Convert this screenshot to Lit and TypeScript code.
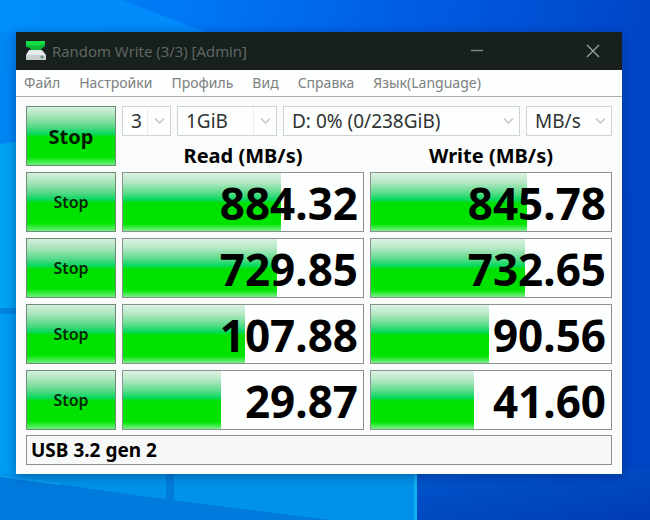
import { LitElement, html, css, svg } from "lit";
import { customElement, property } from "lit/decorators.js";

type Result = { value: string; fill: number };

const MENU = ["Файл", "Настройки", "Профиль", "Вид", "Справка", "Язык(Language)"];

const TESTS: { read: Result; write: Result }[] = [
  { read: { value: "884.32", fill: 66 }, write: { value: "845.78", fill: 65 } },
  { read: { value: "729.85", fill: 64 }, write: { value: "732.65", fill: 64 } },
  { read: { value: "107.88", fill: 51 }, write: { value: "90.56", fill: 49 } },
  { read: { value: "29.87", fill: 41 }, write: { value: "41.60", fill: 43 } },
];

@customElement("desktop-wallpaper")
class DesktopWallpaper extends LitElement {
  static styles = css`
    :host { display: block; }
    .art { display: block; width: 100%; height: 100%; }
  `;

  render() {
    return html`
      <svg class="art" viewBox="0 0 650 520" preserveAspectRatio="none" aria-hidden="true">
        ${svg`
          <defs>
            <linearGradient id="sky" x1="0" y1="0" x2="1" y2="0.12">
              <stop offset="0" stop-color="#0088f4" />
              <stop offset="0.3" stop-color="#0076f4" />
              <stop offset="0.6" stop-color="#005ee6" />
              <stop offset="0.95" stop-color="#0048ca" />
              <stop offset="1" stop-color="#0044c4" />
            </linearGradient>
            <linearGradient id="corner" x1="0" y1="0" x2="1" y2="1">
              <stop offset="0" stop-color="#0056cc" />
              <stop offset="1" stop-color="#003cb4" />
            </linearGradient>
          </defs>
          <rect width="650" height="520" fill="url(#sky)" />
          <path d="M0 0H122L205 32H0Z" fill="#0092fc" opacity="0.7" />
          <path d="M0 144L60 136V308H0Z" fill="#00a2f2" />
          <rect y="308" width="60" height="6" fill="#0084de" />
          <rect y="314" width="60" height="170" fill="#009cf2" />
          <rect y="474" width="418" height="46" fill="#0092e8" />
          <rect x="166" y="470" width="8" height="34" fill="#007cd8" />
          <path d="M0 476L170 500L330 520H0Z" fill="#007adc" />
          <path d="M0 476L60 484" stroke="#0a9cea" stroke-width="2" fill="none" />
          <rect x="417" y="470" width="233" height="50" fill="url(#corner)" />
          <rect x="414" y="470" width="3" height="50" fill="#10b0ee" />
        `}
      </svg>
    `;
  }
}

@customElement("drop-down")
class DropDown extends LitElement {
  @property() label = "";
  @property() value = "";
  @property({ type: Boolean, reflect: true }) split = false;

  static styles = css`
    :host { display: grid; height: 30px; box-sizing: border-box; border: 1px solid #cfd3d1; background: #fdfefe; }
    .box {
      grid-area: 1 / 1; width: 100%; min-width: 0; margin: 0; padding: 0 0 0 8px; border: 0; appearance: none;
      background: transparent; color: #2e3331; font: 19px "Noto Sans", sans-serif; line-height: 28px;
    }
    .arrow {
      grid-area: 1 / 1; justify-self: end; align-self: stretch; display: grid; place-items: center;
      width: 22px; pointer-events: none;
    }
    :host([split]) .arrow { border-left: 1px solid #eceeed; }
  `;

  render() {
    return html`
      <select class="box" aria-label=${this.label}><option>${this.value}</option></select>
      <span class="arrow">
        <svg width="11" height="8" viewBox="0 0 11 8" fill="none" stroke="#c0c4c2" stroke-width="1.5">
          <path d="M1 1.5L5.5 6L10 1.5" />
        </svg>
      </span>
    `;
  }
}

@customElement("speed-cell")
class SpeedCell extends LitElement {
  @property() value = "";
  @property({ type: Number }) fill = 0;

  static styles = css`
    :host {
      display: grid; height: 60px; box-sizing: border-box; border: 1px solid #8c908e; background: #fdfffe;
      font: bold 44px "Noto Sans", sans-serif; line-height: 60px; color: #000;
    }
    .bar {
      grid-area: 1 / 1;
      background: linear-gradient(#dcf2e2 0%, #b4e8c4 16%, #5cdc8c 34%, #08d860 46%, #00e000 52%, #00e400 88%, #7cf08c 100%);
    }
    .value { grid-area: 1 / 1; justify-self: end; padding-right: 5px; height: 58px; }
  `;

  render() {
    return html`
      <div class="bar" style="width:${this.fill}%"></div>
      <span class="value">${this.value}</span>
    `;
  }
}

@customElement("app-root")
class AppRoot extends LitElement {
  static styles = css`
    :host {
      display: grid; min-height: 100vh; overflow: hidden;
      font-family: "Noto Sans", "Open Sans", sans-serif; color: #000;
    }
    * { box-sizing: border-box; }
    button { font-family: inherit; margin: 0; padding: 0; border: 0; background: none; color: inherit; }
    .wallpaper { grid-area: 1 / 1; }
    .window {
      grid-area: 1 / 1; align-self: start; position: relative; margin: 32px 28px 0 16px;
      background: #fafcfb; box-shadow: 0 2px 10px rgba(0, 20, 80, 0.4);
    }
    .titlebar { display: flex; align-items: center; height: 38px; padding-left: 10px; background: #17201d; }
    .logo { display: block; }
    .title { margin: 0 auto 0 6px; font: 400 15px "Open Sans", sans-serif; line-height: 20px; color: #626a67; }
    .control { display: grid; place-items: center; width: 58px; height: 38px; }
    .menu { display: flex; gap: 19px; height: 27px; padding: 0 8px; background: #fdfefe; border-bottom: 1px solid #a9adab; }
    .item { font-size: 14px; line-height: 26px; color: #7c807e; }
    .content { display: flex; flex-direction: column; gap: 5px; padding: 9px 10px; }
    .grid { display: grid; grid-template-columns: 90px 1fr 1fr; gap: 6px; }
    .head { grid-column: 2 / 4; display: flex; flex-direction: column; height: 60px; }
    .options { display: flex; gap: 6px; }
    .runs { width: 49px; }
    .size { width: 100px; }
    .drive { flex: 1; }
    .unit { width: 86px; }
    .labels { display: grid; grid-template-columns: 1fr 1fr; gap: 6px; padding-top: 6px; }
    .label { margin: 0; font-size: 20px; line-height: 28px; font-weight: 700; text-align: center; }
    .grid .stop {
      height: 60px; border: 1px solid #6f8a76; font-size: 16px; font-weight: 600; color: #06280c;
      background: linear-gradient(#d4f0dc 0%, #a8e4ba 16%, #58d888 34%, #08d860 46%, #00e000 52%, #00e400 86%, #6cf07c 100%);
    }
    .grid .all { font-size: 20px; font-weight: 700; color: #001a04; }
    .comment {
      width: 100%; height: 30px; padding: 0 4px; border: 1px solid #8c908e; border-radius: 0; background: #f7f9f8;
      font: bold 19px "Noto Sans", sans-serif; color: #000;
    }
  `;

  render() {
    return html`
      <desktop-wallpaper class="wallpaper"></desktop-wallpaper>
      <main class="window">
        <header class="titlebar">
          <svg class="logo" width="20" height="20" viewBox="0 0 20 20" aria-hidden="true">
            <path d="M0 0H19V5L14 9H5L4 7L0 6Z" fill="#0cb838" />
            <path d="M0 0H19V3L9 5L0 4Z" fill="#16dc46" />
            <path d="M3 9H16L20 14V18Q20 19 19 19H1Q0 19 0 18V14Z" fill="#e6eaea" />
            <path d="M0 14H20V18Q20 19 19 19H1Q0 19 0 18Z" fill="#c9cfd0" />
            <circle cx="16" cy="16" r="1.5" fill="#5c8c6c" />
          </svg>
          <h1 class="title">Random Write (3/3) [Admin]</h1>
          <button class="control" aria-label="Minimize">
            <svg width="14" height="14" viewBox="0 0 14 14"><path d="M1 6.5H13" stroke="#7c8481" stroke-width="1.5" /></svg>
          </button>
          <button class="control" aria-label="Maximize" disabled>
            <svg width="12" height="12" viewBox="0 0 12 12"><path d="M1 1H11V11H1Z" fill="none" stroke="#1b2622" /></svg>
          </button>
          <button class="control" aria-label="Close">
            <svg width="14" height="14" viewBox="0 0 14 14"><path d="M1 1L13 13M13 1L1 13" stroke="#8f9693" stroke-width="1.5" /></svg>
          </button>
        </header>
        <nav class="menu">${MENU.map((name) => html`<button class="item">${name}</button>`)}</nav>
        <div class="content">
          <div class="grid">
            <button class="stop all">Stop</button>
            <div class="head">
              <div class="options">
                <drop-down class="runs" split label="Runs" value="3"></drop-down>
                <drop-down class="size" split label="Size" value="1GiB"></drop-down>
                <drop-down class="drive" label="Drive" value="D: 0% (0/238GiB)"></drop-down>
                <drop-down class="unit" label="Unit" value="MB/s"></drop-down>
              </div>
              <div class="labels">
                <h2 class="label">Read (MB/s)</h2>
                <h2 class="label">Write (MB/s)</h2>
              </div>
            </div>
            ${TESTS.map(
              (t) => html`
                <button class="stop">Stop</button>
                <speed-cell value=${t.read.value} fill=${t.read.fill}></speed-cell>
                <speed-cell value=${t.write.value} fill=${t.write.fill}></speed-cell>
              `,
            )}
          </div>
          <input class="comment" aria-label="Comment" value="USB 3.2 gen 2" />
        </div>
      </main>
    `;
  }
}
